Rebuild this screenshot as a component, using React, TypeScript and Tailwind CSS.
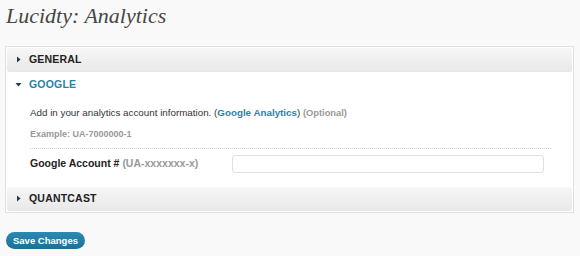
const Arrow = ({ open }: { open?: boolean }) => (
  <svg width="7" height="7" viewBox="0 0 7 7" className="shrink-0">
    {open ? <polygon points="0.5,2 6.5,2 3.5,5.5" fill="#1e3a5c" /> : <polygon points="2,0.5 5.5,3.5 2,6.5" fill="#1e3a5c" />}
  </svg>
);

const SectionHead = ({ title, open, shaded }: { title: string; open?: boolean; shaded?: boolean }) => (
  <div
    className={
      shaded
        ? "flex items-center gap-[7px] h-[24px] pl-[8px] bg-gradient-to-b from-[#f6f6f6] to-[#e9e9e9] border-b border-[#e6e6e6] rounded-[3px]"
        : "flex items-center gap-[7px] h-[25px] pl-[8px] bg-white"
    }
  >
    <Arrow open={open} />
    <span className={open ? "text-[10.5px] font-bold text-[#2883a8] tracking-[0.2px]" : "text-[10.5px] font-bold text-[#222] tracking-[0.2px]"}>
      {title}
    </span>
  </div>
);

export default function App() {
  return (
    <div className="w-[580px] h-[256px] bg-[#f9f9f9] overflow-hidden" style={{ fontFamily: '"Liberation Sans", Arial, sans-serif' }}>
      <h1
        className="pl-[6px] pt-[3px] h-[46px] text-[22px] italic text-[#464646] leading-[26px]"
        style={{ fontFamily: '"Liberation Serif", "DejaVu Serif", serif' }}
      >
        Lucidty: Analytics
      </h1>
      <div className="ml-[5px] w-[569px] border border-[#e0e0e0] bg-white p-px">
        <SectionHead title="GENERAL" shaded />
        <SectionHead title="GOOGLE" open />
        <div className="pl-[23px] pr-[21px] pb-[14px]">
          <p className="text-[9.8px] text-[#333] leading-[14px] pt-[9px]">
            Add in your analytics account information. (
            <span className="font-bold text-[#2883a8]">Google Analytics</span>) <span className="font-bold text-[#999] text-[9.3px]">(Optional)</span>
          </p>
          <p className="text-[9px] font-bold text-[#999] leading-[12px] mt-[8px]">Example: UA-7000000-1</p>
          <div className="mt-[8px] border-t border-dotted border-[#cfcfcf]" />
          <div className="flex items-center mt-[6px]">
            <span className="w-[202px] text-[10.5px] font-bold text-[#222]">
              Google Account # <span className="text-[#999]">(UA-xxxxxxx-x)</span>
            </span>
            <div className="w-[312px] h-[18px] rounded-[3px] border border-[#dfdfdf] bg-white" />
          </div>
        </div>
        <SectionHead title="QUANTCAST" shaded />
      </div>
      <button className="ml-[6px] mt-[19px] h-[17px] px-[7px] rounded-full bg-gradient-to-b from-[#2a8bb4] to-[#1f6f93] text-white text-[9.5px] font-bold leading-[17px]">
        Save Changes
      </button>
    </div>
  );
}
